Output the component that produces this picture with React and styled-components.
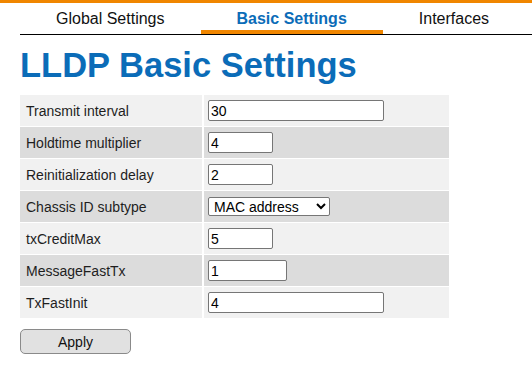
import React, { useState } from 'react'
import styled, { createGlobalStyle } from 'styled-components'

const GlobalStyle = createGlobalStyle`
  * { margin: 0; padding: 0; box-sizing: border-box; }
  body {
    background: #fff;
    font-family: "Liberation Sans", Arial, sans-serif;
    color: #1e1e1e;
  }
`

const Page = styled.div`
  width: 532px;
  border-top: 3px solid #f08600;
`

const Tabs = styled.nav`
  display: flex;
  margin-left: 20px;
  border-bottom: 1px solid #000;
`

const Tab = styled.div`
  height: 31px;
  padding: 7px 36px 0;
  font-size: 16px;
  font-weight: ${p => (p.active ? 'bold' : 'normal')};
  color: ${p => (p.active ? '#0b6cb8' : '#111')};
  border-bottom: 4px solid ${p => (p.active ? '#f08600' : 'transparent')};
  white-space: nowrap;
`

const Content = styled.div`
  padding: 0 20px;
`

const Title = styled.h1`
  margin: 0;
  font-size: 34.5px;
  line-height: 60px;
  font-weight: bold;
  color: #0b6cb8;
`

const Table = styled.div`
  width: 429px;
  display: flex;
  flex-direction: column;
  gap: 1px;
  background: #fff;
`

const Row = styled.div`
  display: grid;
  grid-template-columns: 182px 1fr;
  column-gap: 2px;
  height: 31px;
`

const Label = styled.div`
  display: flex;
  align-items: center;
  padding-left: 6px;
  font-size: 14px;
  background: ${p => (p.dark ? '#dcdcdc' : '#f1f1f1')};
`

const Value = styled.div`
  display: flex;
  align-items: center;
  padding-left: 4px;
  background: ${p => (p.dark ? '#dcdcdc' : '#f1f1f1')};
`

const Input = styled.input`
  width: ${p => p.w}px;
  height: 21px;
  padding: 0 2px;
  border: 1px solid #767676;
  border-radius: 2px;
  background: #fff;
  font-family: "Liberation Sans", Arial, sans-serif;
  font-size: 14px;
  color: #000;
`

const Select = styled.select`
  width: 122px;
  height: 19px;
  padding: 0 1px;
  border: 1px solid #767676;
  border-radius: 2px;
  background: #fff;
  font-family: "Liberation Sans", Arial, sans-serif;
  font-size: 14px;
  color: #000;
`

const Button = styled.button`
  margin-top: 11px;
  width: 111px;
  height: 25px;
  border: 1px solid #8a8a8a;
  border-radius: 5px;
  background: #e1e1e1;
  font-family: "Liberation Sans", Arial, sans-serif;
  font-size: 14px;
  color: #111;
`

const fields = [
  { label: 'Transmit interval', value: '30', w: 176 },
  { label: 'Holdtime multiplier', value: '4', w: 65 },
  { label: 'Reinitialization delay', value: '2', w: 65 },
  { label: 'Chassis ID subtype', select: true },
  { label: 'txCreditMax', value: '5', w: 65 },
  { label: 'MessageFastTx', value: '1', w: 79 },
  { label: 'TxFastInit', value: '4', w: 176 },
]

export default function App() {
  const [vals, setVals] = useState(fields.map(f => f.value))
  const [subtype, setSubtype] = useState('mac')

  return (
    <Page>
      <GlobalStyle />
      <Tabs>
        <Tab>Global Settings</Tab>
        <Tab active>Basic Settings</Tab>
        <Tab>Interfaces</Tab>
      </Tabs>
      <Content>
        <Title>LLDP Basic Settings</Title>
        <Table>
          {fields.map((f, i) => (
            <Row key={f.label}>
              <Label dark={i % 2 === 1}>{f.label}</Label>
              <Value dark={i % 2 === 1}>
                {f.select ? (
                  <Select value={subtype} onChange={e => setSubtype(e.target.value)}>
                    <option value="mac">MAC address</option>
                    <option value="ifname">Interface name</option>
                  </Select>
                ) : (
                  <Input
                    w={f.w}
                    value={vals[i]}
                    onChange={e => {
                      const next = vals.slice()
                      next[i] = e.target.value
                      setVals(next)
                    }}
                  />
                )}
              </Value>
            </Row>
          ))}
        </Table>
        <Button>Apply</Button>
      </Content>
    </Page>
  )
}
